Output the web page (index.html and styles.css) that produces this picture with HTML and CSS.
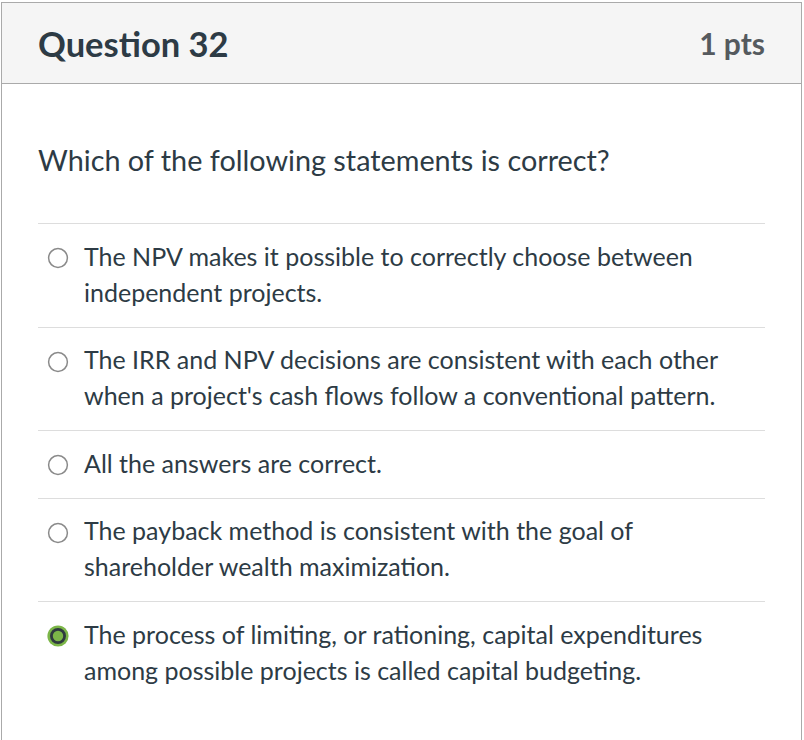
FILE: index.html
```html
<!DOCTYPE html>
<html>
<head>
<meta charset="utf-8">
<link rel="stylesheet" href="styles.css">
</head>
<body>
<div class="question">
  <div class="header">
    <h2 class="title">Question 32</h2>
    <div class="pts">1 pts</div>
  </div>
  <div class="content">
    <div class="prompt">Which of the following statements is correct?</div>
    <div class="answers">
      <div class="answer">
        <svg class="radio" viewBox="0 0 22 22"><circle cx="11" cy="11" r="9.4" fill="#fff" stroke="#8a8a8a" stroke-width="1.5"/></svg>
        <div class="label">The NPV makes it possible to correctly choose between independent projects.</div>
      </div>
      <div class="answer">
        <svg class="radio" viewBox="0 0 22 22"><circle cx="11" cy="11" r="9.4" fill="#fff" stroke="#8a8a8a" stroke-width="1.5"/></svg>
        <div class="label">The IRR and NPV decisions are consistent with each other when a project's cash flows follow a conventional pattern.</div>
      </div>
      <div class="answer">
        <svg class="radio" viewBox="0 0 22 22"><circle cx="11" cy="11" r="9.4" fill="#fff" stroke="#8a8a8a" stroke-width="1.5"/></svg>
        <div class="label">All the answers are correct.</div>
      </div>
      <div class="answer">
        <svg class="radio" viewBox="0 0 22 22"><circle cx="11" cy="11" r="9.4" fill="#fff" stroke="#8a8a8a" stroke-width="1.5"/></svg>
        <div class="label">The payback method is consistent with the goal of shareholder wealth maximization.</div>
      </div>
      <div class="answer">
        <svg class="radio" viewBox="0 0 22 22"><circle cx="11" cy="11" r="10.6" fill="#7cb648"/><circle cx="11" cy="11" r="6.6" fill="#7cb648" stroke="#2f3a3f" stroke-width="2.8"/></svg>
        <div class="label">The process of limiting, or rationing, capital expenditures among possible projects is called capital budgeting.</div>
      </div>
    </div>
  </div>
</div>
</body>
</html>
```
FILE: styles.css
```css
html, body {
  margin: 0;
  padding: 0;
  background: #fff;
}
body {
  font-family: Lato, "Noto Sans", sans-serif;
  color: #2d3b45;
}
.question {
  box-sizing: border-box;
  width: 801px;
  margin: 2px 0 0 1px;
  border: 1px solid #aaaaaa;
  border-bottom: none;
  min-height: 760px;
}
.header {
  display: flex;
  align-items: center;
  justify-content: space-between;
  height: 80px;
  padding: 0 36px 0 36px;
  background: #f5f5f5;
  border-bottom: 1px solid #aaaaaa;
}
.title {
  margin: 0;
  font-size: 34.5px;
  font-weight: 700;
  color: #2d3b45;
}
.pts {
  font-size: 30px;
  font-weight: 700;
  color: #555a5e;
}
.content {
  padding: 0 36px;
}
.prompt {
  font-size: 28.8px;
  line-height: 36px;
  padding: 58px 0 45px;
}
.answers {
  border-top: 1px solid #dddddd;
}
.answer {
  display: flex;
  align-items: flex-start;
  padding: 13.5px 0 17px;
  border-bottom: 1px solid #dddddd;
}
.answer:last-child {
  border-bottom: none;
}
.radio {
  width: 22px;
  height: 22px;
  flex: none;
  margin: 9.5px 0 0 9px;
}
.label {
  margin-left: 15px;
  font-size: 25px;
  line-height: 36px;
}
```
